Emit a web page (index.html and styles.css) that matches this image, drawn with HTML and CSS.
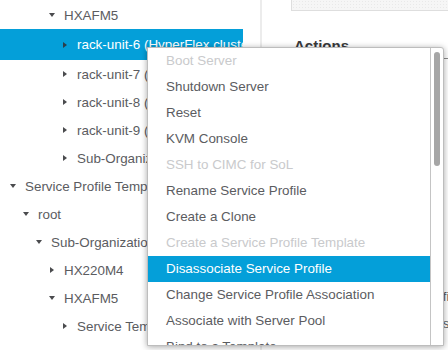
FILE: index.html
```html
<!DOCTYPE html>
<html lang="en">
<head>
    <meta charset="UTF-8">
    <meta name="viewport" content="width=device-width, initial-scale=1.0">
    <title>Servers Tree - Context Menu</title>
    <link rel="stylesheet" href="styles.css">
</head>
<body>

    <div class="layout">
        <div class="tree-pane">
            <ul class="tree">
                <li class="node lv3 first"><span class="caret open"></span>HXAFM5</li>
                <li class="node lv4 selected"><span class="caret"></span>rack-unit-6 (HyperFlex cluster)</li>
                <li class="node lv4"><span class="caret"></span>rack-unit-7 (HyperFlex cluster)</li>
                <li class="node lv4"><span class="caret"></span>rack-unit-8 (HyperFlex cluster)</li>
                <li class="node lv4"><span class="caret"></span>rack-unit-9 (HyperFlex cluster)</li>
                <li class="node lv4"><span class="caret"></span>Sub-Organizations</li>
                <li class="node lv0"><span class="caret open"></span>Service Profile Templates</li>
                <li class="node lv1"><span class="caret open"></span>root</li>
                <li class="node lv2"><span class="caret open"></span>Sub-Organizations</li>
                <li class="node lv3"><span class="caret"></span>HX220M4</li>
                <li class="node lv3"><span class="caret open"></span>HXAFM5</li>
                <li class="node lv4"><span class="caret"></span>Service Template compute-nodes</li>
                <li class="node lv4"><span class="caret"></span>Service Template hx-nodes</li>
            </ul>
        </div>

        <div class="detail-pane">
            <div class="status-box"></div>
            <h3 class="section-title">Actions</h3>
            <ul class="action-links">
                <li>Set Desired Power State</li>
                <li>Boot Server</li>
                <li>Shutdown Server</li>
                <li>Reset</li>
                <li>KVM Console &gt;&gt;</li>
                <li>SSH to CIMC for SoL &gt;&gt;</li>
                <li>Rename Service Profile</li>
                <li>Create a Clone</li>
                <li>Disassociate Service Profile ......</li>
                <li>Change Service Profile Associate ......</li>
            </ul>
        </div>
    </div>

    <div class="context-menu">
        <ul class="menu-list">
            <li class="menu-item disabled">Boot Server</li>
            <li class="menu-item">Shutdown Server</li>
            <li class="menu-item">Reset</li>
            <li class="menu-item">KVM Console</li>
            <li class="menu-item disabled">SSH to CIMC for SoL</li>
            <li class="menu-item">Rename Service Profile</li>
            <li class="menu-item">Create a Clone</li>
            <li class="menu-item disabled">Create a Service Profile Template</li>
            <li class="menu-item active">Disassociate Service Profile</li>
            <li class="menu-item">Change Service Profile Association</li>
            <li class="menu-item">Associate with Server Pool</li>
            <li class="menu-item">Bind to a Template</li>
        </ul>
        <div class="menu-scroll">
            <div class="menu-thumb"></div>
        </div>
    </div>

</body>
</html>
```

FILE: styles.css
```css
body {
    margin: 0;
    width: 448px;
    height: 350px;
    overflow: hidden;
    position: relative; /* anchor for the context menu */
    background-color: #fff;
    font-family: 'Liberation Sans', Arial, sans-serif;
    font-size: 13.4px;
    color: #5b5c5f;
}

ul {
    list-style: none;
    margin: 0;
    padding: 0;
}

.layout {
    display: flex;
    height: 350px;
}

/* ---- tree ---- */

.tree-pane {
    width: 243px;
    flex-shrink: 0;
    overflow: hidden;
    margin-right: 17px;
}

.tree {
    padding-top: 1px;
}

.node {
    display: flex;
    align-items: center;
    height: 28px;
    white-space: nowrap;
}

.node.selected {
    height: 31px;
    background-color: #049fd9;
    color: #fff;
}

.lv0 { padding-left: 9px; }
.lv1 { padding-left: 22px; }
.lv2 { padding-left: 35px; }
.lv3 { padding-left: 48px; }
.lv4 { padding-left: 61px; }

.caret {
    width: 8px;
    height: 8px;
    margin-right: 8px;
    flex-shrink: 0;
    display: flex;
    align-items: center;
    justify-content: center;
}

.caret::before {
    content: "";
    border-top: 3.5px solid transparent;
    border-bottom: 3.5px solid transparent;
    border-left: 4px solid #4a4b4e;
}

.caret.open::before {
    border-left: 3.5px solid transparent;
    border-right: 3.5px solid transparent;
    border-top: 4px solid #4a4b4e;
    border-bottom: none;
}

.selected .caret::before {
    border-left-color: #2d3e4a;
}

/* ---- detail pane ---- */

.detail-pane {
    flex: 1;
    min-width: 0;
    padding-left: 29px;
    overflow: hidden;
    border-left: 2px solid #ececec;
}

.status-box {
    height: 10px;
    border: 1px solid #dedede;
    border-top: none;
    border-right: none;
    background-color: #f6f6f6;
    background-image: radial-gradient(#e9e9e9 0.6px, transparent 0.7px);
    background-size: 3px 3px;
}

.section-title {
    margin: 26px 0 0 3px;
    font-size: 15px;
    font-weight: 600;
    color: #39393b;
    padding-bottom: 4px;
    border-bottom: 1px solid #8a8a8a;
}

.action-links {
    padding: 8px 0 0 3px;
}

.action-links li {
    height: 27px;
    line-height: 27px;
    white-space: nowrap;
    color: #5b5c5f;
}

/* ---- context menu ---- */

.context-menu {
    position: absolute;
    left: 147px;
    top: 47px;
    width: 295px;
    height: 297px;
    display: flex;
    background-color: #fff;
    border: 1px solid #bdbdbd;
    border-radius: 0 3px 0 0;
    box-shadow: 0 1px 6px rgba(0, 0, 0, 0.35);
    overflow: hidden;
}

.menu-list {
    width: 282px;
    border-right: 1px solid #c4c4c4;
}

.menu-item {
    height: 26px;
    line-height: 26px;
    padding-left: 18px;
    white-space: nowrap;
    color: #5b5c5f;
}

.menu-item.disabled {
    color: #c9cacc;
}

.menu-item.active {
    background-color: #049fd9;
    color: #fff;
}

.menu-scroll {
    flex: 1;
    padding: 4px 0 0 3px;
}

.menu-thumb {
    width: 6px;
    height: 114px;
    border-radius: 3px;
    background-color: #a6a6a6;
}
```
